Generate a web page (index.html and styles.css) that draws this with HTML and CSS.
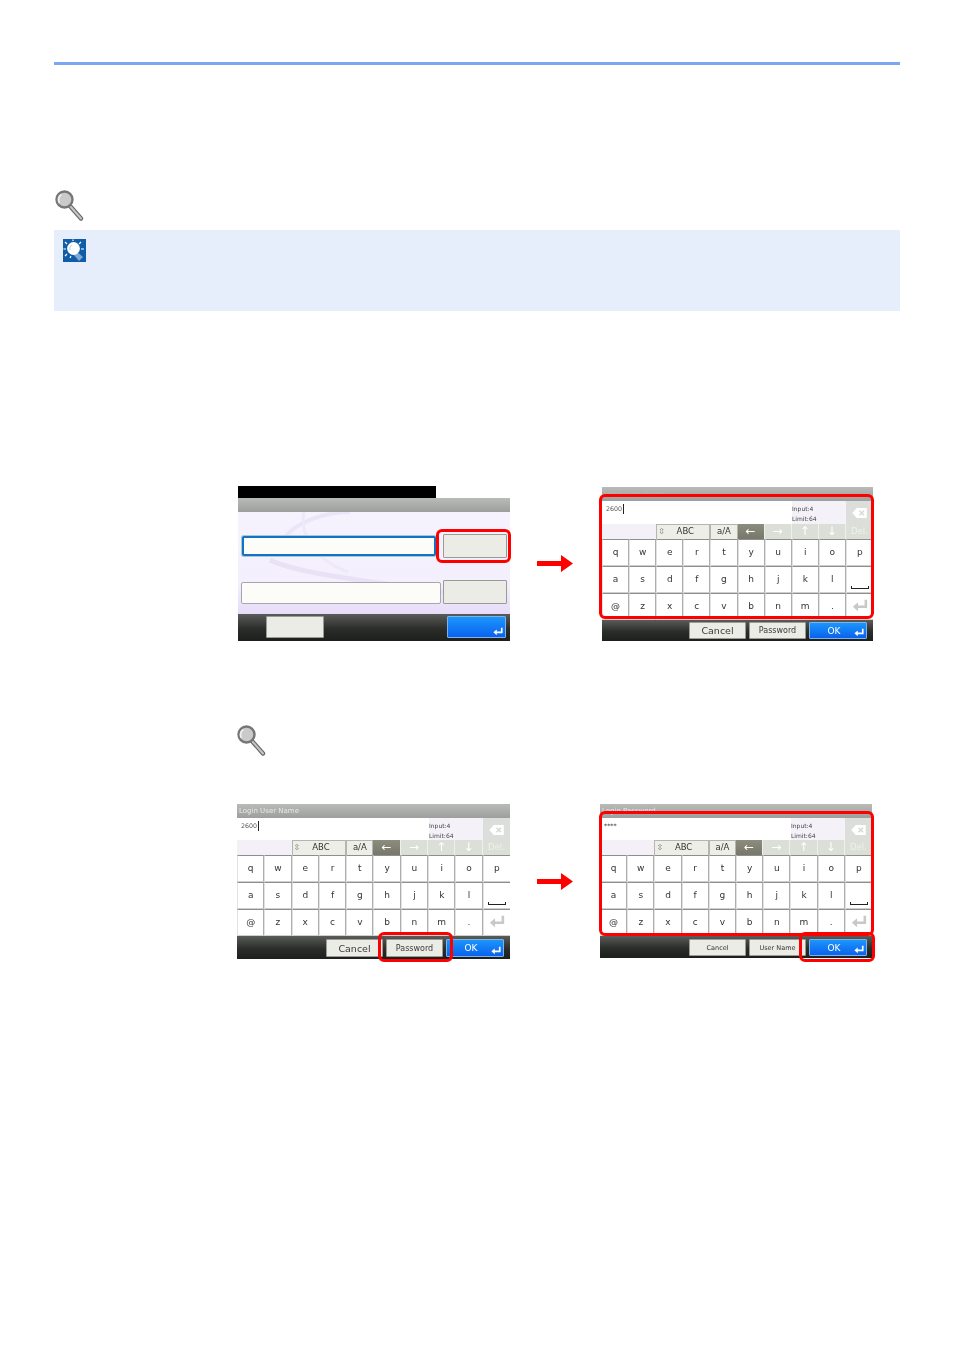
FILE: index.html
```html
<!DOCTYPE html>
<html lang="en">
<head>
    <meta charset="UTF-8">
    <title>Login User Name and Password</title>
    <link rel="stylesheet" href="styles.css">
</head>
<body>
<svg class="defs" width="0" height="0">
    <defs>
        <symbol id="magnifier" viewBox="0 0 30 32">
            <path d="M15 16 L26 28.500" stroke="#686868" stroke-width="4.400" stroke-linecap="round"/>
            <path d="M15 16 L26 28.500" stroke="#c6c6c6" stroke-width="2" stroke-linecap="round"/>
            <circle cx="9.500" cy="9.500" r="8" fill="#c9caca" stroke="#767676" stroke-width="2.400"/>
            <path d="M4.500 13 A6 6 0 0 1 6.500 4.500" fill="none" stroke="#efefef" stroke-width="1.800"/>
        </symbol>
        <symbol id="enter" viewBox="0 0 12 10">
            <path d="M10.500 0.500 V6 H3.500" fill="none" stroke="currentColor" stroke-width="2"/>
            <path d="M0.500 6 L4.500 2.500 V9.500 Z" fill="currentColor"/>
        </symbol>
        <symbol id="backspace" viewBox="0 0 16 11">
            <path d="M5 0 H16 V11 H5 L0 5.500 Z" fill="#fff"/>
            <path d="M8 3 L13 8 M13 3 L8 8" stroke="#d8d8d8" stroke-width="1.600"/>
        </symbol>
    </defs>
</svg>
<div class="page">
    <div class="rule"></div>

    <svg class="magnifier"><use href="#magnifier"/></svg>

    <div class="note">
        <svg class="note-icon" viewBox="0 0 23 23">
            <rect width="23" height="23" fill="#0f5ca8"/>
            <path d="M13 12 L20 18 L16 22 L10 15 Z" fill="#7fa9d4"/>
            <circle cx="10.500" cy="9.500" r="6.400" fill="#fff"/>
            <path d="M7 11 A4 4 0 0 1 9 6" fill="none" stroke="#b9cfe6" stroke-width="1"/>
            <path d="M2 3 L4 5 M10 0.500 V2 M18 3 L16 5 M0.500 10 H3 M18 10 H21 M2 17 L4 15 M7 19 L8 17" stroke="#fff" stroke-width="1.200"/>
        </svg>
    </div>

    <div class="shots shots-first">
        <div class="screen screen-login">
            <div class="login-black"></div>
            <div class="title-bar"></div>
            <div class="login-body">
                <svg class="swoosh" viewBox="0 0 272 102" preserveAspectRatio="none">
                    <path d="M45 27 C60 8 90 0 112 0" fill="none" stroke="#ebe5f8" stroke-width="4"/>
                    <path d="M32 48 C70 66 160 70 272 92" fill="none" stroke="#e9e2f7" stroke-width="5"/>
                    <path d="M66 0 C62 18 72 46 110 60" fill="none" stroke="#eee9f9" stroke-width="3"/>
                </svg>
                <div class="login-row">
                    <div class="login-input login-input-active"></div>
                    <div class="plain-btn login-side-btn"></div>
                </div>
                <div class="login-row login-row-second">
                    <div class="login-input"></div>
                    <div class="plain-btn login-side-btn"></div>
                </div>
            </div>
            <div class="bottom-bar login-bottom">
                <div class="plain-btn login-cancel"></div>
                <div class="ok-btn"><svg class="ok-enter"><use href="#enter"/></svg></div>
            </div>
            <div class="mark mark-login"></div>
        </div>

        <svg class="arrow" viewBox="0 0 36 17"><path d="M0 6 H24 V0 L36 8.500 L24 17 V11 H0 Z" fill="#f00"/></svg>

        <div class="screen screen-kbd screen-kbd-top">
            <div class="title-bar title-faint">Login User Name</div>
            <div class="entry">
                <div class="entry-text">2600<span class="caret"></span></div>
                <div class="entry-info">Input:4<br>Limit:64</div>
                <div class="entry-del"><svg class="del-icon"><use href="#backspace"/></svg></div>
            </div>
            <div class="toolbar">
                <div class="tool-blank"></div>
                <div class="tool-abc"><span class="updown">⇳</span>ABC</div>
                <div class="tool-case">a/A</div>
                <div class="tool-arrow tool-arrow-on">←</div>
                <div class="tool-arrow">→</div>
                <div class="tool-arrow">↑</div>
                <div class="tool-arrow">↓</div>
                <div class="tool-arrow tool-del">Del.</div>
            </div>
            <div class="keys">
                <span>q</span><span>w</span><span>e</span><span>r</span><span>t</span><span>y</span><span>u</span><span>i</span><span>o</span><span>p</span>
                <span>a</span><span>s</span><span>d</span><span>f</span><span>g</span><span>h</span><span>j</span><span>k</span><span>l</span><span class="key-space"><i></i></span>
                <span>@</span><span>z</span><span>x</span><span>c</span><span>v</span><span>b</span><span>n</span><span>m</span><span>.</span><span class="key-enter"><svg><use href="#enter"/></svg></span>
            </div>
            <div class="bottom-bar">
                <div class="plain-btn btn-cancel">Cancel</div>
                <div class="plain-btn btn-alt">Password</div>
                <div class="ok-btn">OK<svg class="ok-enter"><use href="#enter"/></svg></div>
            </div>
            <div class="mark mark-keys"></div>
        </div>
    </div>

    <svg class="magnifier magnifier-step"><use href="#magnifier"/></svg>

    <div class="shots shots-second">
        <div class="screen screen-kbd screen-kbd-left">
            <div class="title-bar">Login User Name</div>
            <div class="entry">
                <div class="entry-text">2600<span class="caret"></span></div>
                <div class="entry-info">Input:4<br>Limit:64</div>
                <div class="entry-del"><svg class="del-icon"><use href="#backspace"/></svg></div>
            </div>
            <div class="toolbar">
                <div class="tool-blank"></div>
                <div class="tool-abc"><span class="updown">⇳</span>ABC</div>
                <div class="tool-case">a/A</div>
                <div class="tool-arrow tool-arrow-on">←</div>
                <div class="tool-arrow">→</div>
                <div class="tool-arrow">↑</div>
                <div class="tool-arrow">↓</div>
                <div class="tool-arrow tool-del">Del.</div>
            </div>
            <div class="keys">
                <span>q</span><span>w</span><span>e</span><span>r</span><span>t</span><span>y</span><span>u</span><span>i</span><span>o</span><span>p</span>
                <span>a</span><span>s</span><span>d</span><span>f</span><span>g</span><span>h</span><span>j</span><span>k</span><span>l</span><span class="key-space"><i></i></span>
                <span>@</span><span>z</span><span>x</span><span>c</span><span>v</span><span>b</span><span>n</span><span>m</span><span>.</span><span class="key-enter"><svg><use href="#enter"/></svg></span>
            </div>
            <div class="bottom-bar">
                <div class="plain-btn btn-cancel">Cancel</div>
                <div class="plain-btn btn-alt">Password</div>
                <div class="ok-btn">OK<svg class="ok-enter"><use href="#enter"/></svg></div>
            </div>
            <div class="mark mark-password"></div>
        </div>

        <svg class="arrow" viewBox="0 0 36 17"><path d="M0 6 H24 V0 L36 8.500 L24 17 V11 H0 Z" fill="#f00"/></svg>

        <div class="screen screen-kbd screen-kbd-right">
            <div class="title-bar">Login Password</div>
            <div class="entry">
                <div class="entry-text entry-stars">****</div>
                <div class="entry-info">Input:4<br>Limit:64</div>
                <div class="entry-del"><svg class="del-icon"><use href="#backspace"/></svg></div>
            </div>
            <div class="toolbar">
                <div class="tool-blank"></div>
                <div class="tool-abc"><span class="updown">⇳</span>ABC</div>
                <div class="tool-case">a/A</div>
                <div class="tool-arrow tool-arrow-on">←</div>
                <div class="tool-arrow">→</div>
                <div class="tool-arrow">↑</div>
                <div class="tool-arrow">↓</div>
                <div class="tool-arrow tool-del">Del.</div>
            </div>
            <div class="keys">
                <span>q</span><span>w</span><span>e</span><span>r</span><span>t</span><span>y</span><span>u</span><span>i</span><span>o</span><span>p</span>
                <span>a</span><span>s</span><span>d</span><span>f</span><span>g</span><span>h</span><span>j</span><span>k</span><span>l</span><span class="key-space"><i></i></span>
                <span>@</span><span>z</span><span>x</span><span>c</span><span>v</span><span>b</span><span>n</span><span>m</span><span>.</span><span class="key-enter"><svg><use href="#enter"/></svg></span>
            </div>
            <div class="bottom-bar bottom-bar-right">
                <div class="plain-btn btn-small">Cancel</div>
                <div class="plain-btn btn-small">User Name</div>
                <div class="ok-btn">OK<svg class="ok-enter"><use href="#enter"/></svg></div>
            </div>
            <div class="mark mark-keys mark-keys-right"></div>
            <div class="mark mark-ok"></div>
        </div>
    </div>
</div>
</body>
</html>
```

FILE: styles.css
```css
body {
    margin: 0;
    background-color: #ffffff;
    font-family: "DejaVu Sans", sans-serif;
    color: #333;
}
.defs {
    position: absolute;
}
.page {
    padding: 62px 54px 0;
    height: 1288px;
}
.rule {
    height: 3px;
    background-color: #7ba7f2;
}
.magnifier {
    display: block;
    width: 30px;
    height: 32px;
    margin: 125px 0 0 1px;
}
.magnifier-step {
    margin: 84px 0 0 183px;
}
.note {
    margin-top: 8px;
    height: 81px;
    background-color: #e6edfb;
    padding: 9px 0 0 9px;
    box-sizing: border-box;
}
.note-icon {
    display: block;
    width: 23px;
    height: 23px;
}
.shots {
    display: flex;
    align-items: center;
}
.shots-first {
    margin-top: 175px;
    padding-left: 184px;
}
.shots-second {
    margin-top: 47px;
    padding-left: 183px;
}
.arrow {
    flex: none;
    width: 36px;
    height: 17px;
    margin-left: 27px;
    margin-right: 27px;
}
.shots-first .arrow {
    margin-right: 29px;
}

/* screens */
.screen {
    position: relative;
    flex: none;
    display: flex;
    flex-direction: column;
    background-color: #fff;
}
.screen-login {
    width: 272px;
    height: 155px;
}
.screen-kbd-top {
    width: 271px;
    height: 154px;
    margin-top: 1px;
}
.screen-kbd-left {
    width: 273px;
    height: 155px;
}
.screen-kbd-right {
    width: 272px;
    height: 154px;
    margin-bottom: 1px;
}
.title-bar, .entry, .toolbar, .keys, .bottom-bar, .login-body {
    filter: blur(0.35px);
}
.title-bar {
    flex: none;
    height: 14px;
    padding-left: 2px;
    font-size: 7px;
    line-height: 14px;
    color: #e8e8e8;
    background: linear-gradient(#b9bbb9, #9d9f9d);
}
.title-faint {
    color: #b4b6b4;
}
.login-black {
    width: 198px;
    height: 12px;
    flex: none;
    background-color: #000;
}
.login-body {
    position: relative;
    flex: none;
    height: 102px;
    padding-top: 22px;
    box-sizing: border-box;
    background: linear-gradient(#f6f2fe, #f4effd 70%, #e6dcf8);
}
.swoosh {
    position: absolute;
    left: 0;
    top: 0;
    width: 100%;
    height: 100%;
}
.login-row {
    position: relative;
    display: flex;
    align-items: center;
    justify-content: space-between;
    height: 24px;
    padding: 0 3px;
}
.login-row-second {
    margin-top: 22px;
}
.login-input {
    width: 200px;
    height: 20px;
    box-sizing: border-box;
    border: 1px solid #a9a4b0;
    border-radius: 2px;
    background-color: #fcfcf9;
}
.login-row-second .login-input {
    height: 22px;
    margin-top: 2px;
}
.login-input-active {
    width: 194px;
    margin-left: 1px;
    margin-right: 6px;
    border: 2px solid #1272c4;
    box-shadow: 0 0 0 1px #a7c9cf;
}
.login-side-btn {
    width: 64px;
    height: 24px;
    border-bottom: 2px solid #77776f;
}
.plain-btn {
    display: flex;
    align-items: center;
    justify-content: center;
    box-sizing: border-box;
    background-color: #ecece6;
    border: 1px solid #9b9b96;
    border-radius: 1px;
    font-size: 9.500px;
    color: #3a3a3a;
}
.bottom-bar {
    flex: 1;
    display: flex;
    justify-content: flex-end;
    gap: 3px;
    padding: 2px 6px 2px 0;
    background: linear-gradient(#5a5c5a, #2a2d2a 55%, #1c1f1c);
}
.bottom-bar .plain-btn {
    width: 57px;
}
.bottom-bar-right {
    padding-right: 5px;
}
.shots-second .bottom-bar {
    padding-top: 3px;
}
.bottom-bar.login-bottom {
    height: 27px;
    justify-content: space-between;
    padding: 2px 4px 3px 28px;
}
.bottom-bar .login-cancel {
    width: 58px;
}
.login-bottom .ok-btn {
    width: 59px;
}
.btn-alt {
    font-size: 8px;
}
.bottom-bar .btn-small {
    font-size: 6.500px;
    color: #333;
}
.ok-btn {
    position: relative;
    width: 58px;
    box-sizing: border-box;
    padding-right: 8px;
    display: flex;
    align-items: center;
    justify-content: center;
    border: 1px solid #7fb2e8;
    border-radius: 1px;
    background: linear-gradient(#1c96fb, #0a62ee);
    color: #fff;
    font-size: 9px;
}
.ok-enter {
    position: absolute;
    right: 2px;
    bottom: 1px;
    width: 10px;
    height: 9px;
    color: #fff;
}

/* keyboard */
.entry {
    flex: none;
    height: 23px;
    display: flex;
}
.shots-second .entry {
    height: 22px;
}
.entry-text {
    flex: 1;
    padding: 4px 0 0 4px;
    font-size: 6.300px;
    line-height: 8px;
    color: #555;
    display: flex;
    align-items: flex-start;
}
.entry-stars {
    font-weight: bold;
    font-size: 6px;
}
.caret {
    width: 1px;
    height: 10px;
    margin-top: -1px;
    margin-left: 1px;
    background-color: #222;
}
.entry-info {
    flex: none;
    width: 54px;
    box-sizing: border-box;
    padding: 3px 0 0 0;
    background-color: #f4f1f8;
    font-size: 6px;
    line-height: 10px;
    color: #444;
}
.entry-del {
    flex: none;
    width: 27px;
    display: flex;
    align-items: center;
    justify-content: center;
    background-color: #dcdedb;
}
.del-icon {
    width: 15px;
    height: 10px;
    margin-top: 1px;
}
.toolbar {
    flex: none;
    height: 15px;
    display: grid;
    grid-template-columns: repeat(10, 1fr);
    background-color: #f3f0f7;
    font-size: 8.500px;
    line-height: 14px;
    text-align: center;
}
.tool-blank {
    grid-column: span 2;
}
.tool-abc {
    position: relative;
    grid-column: span 2;
    padding-left: 4px;
    background-color: #eeeee8;
    border: 1px solid #b5b5b0;
    border-bottom: none;
    box-sizing: border-box;
    line-height: 13px;
}
.updown {
    position: absolute;
    left: 1px;
    top: 0;
    font-size: 8px;
    color: #777;
}
.tool-case {
    background-color: #eeeee8;
    border: 1px solid #b5b5b0;
    border-bottom: none;
    box-sizing: border-box;
    line-height: 13px;
}
.tool-arrow {
    background-color: #dcdfd8;
    color: #fff;
    font-size: 12px;
    border-right: 1px solid #eef0ea;
    box-sizing: border-box;
}
.tool-arrow-on {
    background: linear-gradient(#8d8d7e, #77776a);
}
.tool-del {
    font-size: 8.500px;
    border-right: none;
    color: #eef0ea;
}
.keys {
    flex: none;
    height: 81px;
    display: grid;
    grid-template-columns: repeat(10, 1fr);
    grid-template-rows: repeat(3, 27px);
    background-color: #fff;
}
.keys span {
    display: flex;
    align-items: center;
    justify-content: center;
    padding-bottom: 2px;
    box-sizing: border-box;
    border-top: 1px solid #8e8e8c;
    border-left: 1px solid #e2e2e0;
    border-right: 1px solid #aeaeac;
    border-bottom: 1px solid #cfcfcd;
    background-color: #fff;
    font-size: 9px;
    color: #333;
}
.keys span:nth-child(10n) {
    border-right: none;
}
.keys .key-space {
    align-items: flex-end;
    padding-bottom: 3px;
}
.key-space i {
    display: block;
    width: 18px;
    height: 3px;
    box-sizing: border-box;
    border: 1px solid #222;
    border-top: none;
}
.key-enter svg {
    width: 16px;
    height: 13px;
    color: #c8c8c6;
}

/* red highlight frames */
.mark {
    position: absolute;
    box-sizing: border-box;
    border: 3px solid #f00;
    border-radius: 6px;
}
.mark-login {
    left: 198px;
    top: 43px;
    width: 75px;
    height: 34px;
}
.mark-keys {
    left: -3px;
    top: 7px;
    width: 275px;
    height: 125px;
}
.mark-keys-right {
    left: -1px;
}
.mark-password {
    left: 141px;
    top: 128px;
    width: 75px;
    height: 30px;
}
.mark-ok {
    left: 199px;
    top: 128px;
    width: 76px;
    height: 30px;
}
```
